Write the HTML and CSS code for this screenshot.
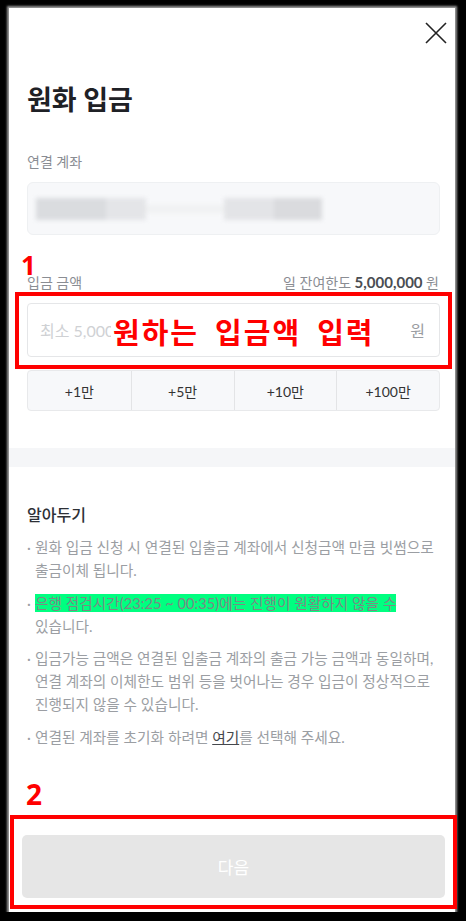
FILE: index.html
```html
<!DOCTYPE html>
<html lang="ko">
<head>
  <meta charset="utf-8">
  <link rel="stylesheet" href="styles.css">
</head>
<body>
  <div class="sheet">
    <div class="top-bar">
      <button class="close-btn" aria-label="닫기">
        <svg width="22" height="22" viewBox="0 0 22 22">
          <path d="M1 1 L21 21 M21 1 L1 21" stroke="#222" stroke-width="1.6" fill="none"/>
        </svg>
      </button>
    </div>

    <div class="content">
      <h1 class="title">원화 입금</h1>

      <div class="field">
        <div class="field-label">연결 계좌</div>
        <div class="account-box">
          <div class="masked">
            <span class="m1"></span><span class="m2"></span><span class="m3"></span><span class="m4"></span><span class="m5"></span>
          </div>
        </div>
      </div>

      <div class="field amount">
        <div class="field-row">
          <span class="field-label">입금 금액</span>
          <span class="limit">일 잔여한도 <b>5,000,000</b> 원</span>
        </div>
        <div class="amount-input">
          <input type="text" placeholder="최소 5,000">
          <span class="unit">원</span>
        </div>
        <div class="quick-add">
          <button>+1만</button>
          <button>+5만</button>
          <button>+10만</button>
          <button>+100만</button>
        </div>
      </div>
    </div>

    <div class="band"></div>

    <div class="notice">
      <h2>알아두기</h2>
      <ul>
        <li>원화 입금 신청 시 연결된 입출금 계좌에서 신청금액 만큼 빗썸으로 출금이체 됩니다.</li>
        <li><mark>은행 점검시간(23:25 ~ 00:35)에는 진행이 원활하지 않을 수</mark> 있습니다.</li>
        <li>입금가능 금액은 연결된 입출금 계좌의 출금 가능 금액과 동일하며, 연결 계좌의 이체한도 범위 등을 벗어나는 경우 입금이 정상적으로 진행되지 않을 수 있습니다.</li>
        <li>연결된 계좌를 초기화 하려면 <a href="#">여기</a>를 선택해 주세요.</li>
      </ul>
    </div>

    <div class="footer">
      <button class="next-btn" disabled>다음</button>
    </div>

    <!-- guide marks -->
    <div class="mark-num num-1">1</div>
    <div class="mark-box box-1"><span class="mark-text">원하는 입금액 입력</span></div>
    <div class="mark-num num-2">2</div>
    <div class="mark-box box-2"></div>
  </div>
</body>
</html>
```

FILE: styles.css
```css
* { box-sizing: border-box; }

body {
  margin: 0;
  background: #000;
  font-family: Lato, "Noto Sans CJK KR", "Noto Sans", sans-serif;
  color: #222;
}

.sheet {
  position: relative;
  width: 446px;
  height: 904px;
  margin: 8px 0 0 9px;
  background: #fff;
  display: flex;
  flex-direction: column;
  box-shadow: 0 0 2px 2px rgba(190, 190, 190, 0.8);
}

.top-bar {
  display: flex;
  justify-content: flex-end;
  padding: 14px 8px 0 0;
}
.close-btn {
  border: none;
  background: none;
  padding: 0;
  width: 22px;
  height: 22px;
  cursor: pointer;
}
.close-btn svg { display: block; }

.content { padding: 0 15px 0 18px; }

.title {
  margin: 38px 0 0;
  font-size: 27px;
  line-height: 36px;
  font-weight: 700;
  color: #1f2126;
}

.field { margin-top: 34px; }
.field-label {
  font-size: 14px;
  line-height: 20px;
  color: #8a8d93;
}
.account-box {
  margin-top: 10px;
  height: 53px;
  background: #f7f8fa;
  border: 1px solid #eef0f2;
  border-radius: 6px;
  display: flex;
  align-items: center;
  padding-left: 8px;
}
.masked {
  display: flex;
  align-items: center;
  filter: blur(2px);
}
.masked span { display: block; height: 22px; }
.masked .m1 { width: 70px; background: #dadcdf; }
.masked .m2 { width: 40px; background: #e4e5e8; }
.masked .m3 { width: 78px; background: #f0f1f2; height: 8px; }
.masked .m4 { width: 50px; background: #e3e4e7; }
.masked .m5 { width: 48px; background: #dadbde; }

.amount { margin-top: 37px; }
.field-row {
  display: flex;
  justify-content: space-between;
  align-items: baseline;
  padding-right: 1px;
}
.limit {
  font-size: 14px;
  color: #8a8d93;
}
.limit b {
  font-weight: 700;
  color: #4a4d52;
  font-size: 15px;
}

.amount-input {
  margin-top: 10px;
  height: 54px;
  border: 1px solid #e5e6e8;
  border-radius: 4px;
  display: flex;
  align-items: center;
  padding: 0 14px 0 12px;
}
.amount-input input {
  flex: 1;
  border: none;
  outline: none;
  font: inherit;
  font-size: 16px;
  color: #222;
  background: transparent;
  padding: 0;
}
.amount-input input::placeholder { color: #cfd1d4; }
.unit {
  font-size: 16px;
  color: #9a9da2;
}

.quick-add {
  margin-top: 13px;
  height: 41px;
  display: grid;
  grid-template-columns: repeat(4, 1fr);
  background: #f7f8fa;
  border: 1px solid #e8e9eb;
  border-radius: 4px;
  overflow: hidden;
}
.quick-add button {
  border: none;
  background: none;
  font: inherit;
  font-size: 14px;
  color: #333;
  cursor: pointer;
}
.quick-add button + button { border-left: 1px solid #e3e4e6; }

.band {
  margin-top: 37px;
  height: 19px;
  background: #f5f6f8;
}

.notice { padding: 37px 15px 0 18px; }
.notice h2 {
  margin: 0;
  font-size: 16px;
  line-height: 22px;
  font-weight: 500;
  color: #2d3036;
}
.notice ul {
  list-style: none;
  margin: 10px 0 0;
  padding: 0;
}
.notice li {
  position: relative;
  padding-left: 8px;
  font-size: 14.7px;
  line-height: 23px;
  color: #9b9ea3;
  word-break: keep-all;
}
.notice li + li { margin-top: 9.5px; }
.notice li::before {
  content: "·";
  position: absolute;
  left: 0;
  top: 0;
}
.notice mark {
  background: #00ff80;
  color: #7c8a84;
}
.notice a {
  color: #45484d;
  text-decoration: underline;
}

.footer {
  margin-top: auto;
  padding: 0 10px 14px 13px;
}
.next-btn {
  width: 100%;
  height: 63px;
  border: none;
  border-radius: 5px;
  background: #e6e6e6;
  color: #fff;
  font: inherit;
  font-size: 17px;
}

/* red guide marks over the form */
.mark-num {
  position: absolute;
  color: #ff0000;
  font-weight: 700;
  font-family: "Noto Sans", sans-serif;
  line-height: 1;
}
.num-1 { left: 12px; top: 244px; font-size: 26px; }
.num-2 { left: 17px; top: 772px; font-size: 28px; }

.mark-box {
  position: absolute;
  border: 4px solid #ff0000;
}
.box-1 {
  left: 6px;
  top: 284px;
  width: 437px;
  height: 77px;
  display: flex;
  align-items: center;
}
.box-2 {
  left: 1px;
  top: 807px;
  width: 447px;
  height: 94px;
}
.mark-text {
  margin-left: 92px;
  color: #ff0000;
  font-size: 29px;
  font-weight: 700;
  letter-spacing: 2px;
  word-spacing: 7px;
  background: #fff;
  padding: 0 2px;
}
```
